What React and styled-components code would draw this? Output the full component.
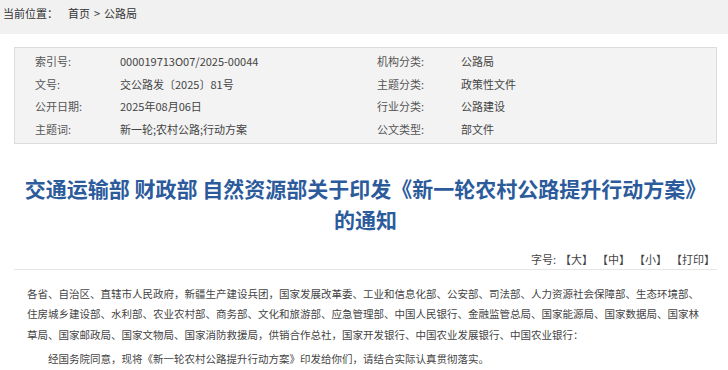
import React from 'react';
import styled, { createGlobalStyle } from 'styled-components';

const GlobalStyle = createGlobalStyle`
  body {
    margin: 0;
    background: #f1f1f1;
    font-family: "Noto Sans CJK SC", "Noto Sans", sans-serif;
    color: #333;
  }
`;

const Breadcrumb = styled.div`
  height: 34px;
  padding: 0 3px 8px;
  box-sizing: border-box;
  display: flex;
  align-items: center;
  gap: 4px;
  font-size: 11px;
  line-height: 1;
  color: #333;
`;

const Crumb = styled.span`
  margin-left: ${p => (p.gap ? '6px' : '0')};
`;

const Page = styled.div`
  background: #fff;
  padding: 13px 11px 0 14px;
  height: 336px;
  box-sizing: border-box;
`;

const InfoBox = styled.div`
  border: 1px solid #dcdcdc;
  background: #f3f3f3;
  padding: 2px 0 3px 20px;
  display: grid;
  grid-template-columns: 85px 257px 84px 1fr;
  grid-auto-rows: 22.5px;
  align-items: center;
  font-size: 11px;
`;

const Label = styled.span`
  color: #555;
`;

const Value = styled.span`
  color: #444;
`;

const Title = styled.h1`
  margin: 29px 0 0;
  text-align: center;
  font-size: 21px;
  line-height: 31px;
  font-weight: bold;
  color: #2c5b9c;
`;

const Tools = styled.div`
  display: flex;
  justify-content: flex-end;
  gap: 4px;
  margin-top: 16px;
  padding: 0 2px 2px 0;
  font-size: 11px;
  line-height: 16px;
  color: #444;
  border-bottom: 1px solid #e6e6e6;
`;

const Body = styled.div`
  padding: 14px 14px 0 13px;
  font-size: 10.5px;
  line-height: 20.3px;
  color: #444;
`;

const Para = styled.p`
  margin: 0 0 4px;
  text-indent: ${p => (p.indent ? '2em' : '0')};
`;

const rows = [
  ['索引号:', '000019713O07/2025-00044', '机构分类:', '公路局'],
  ['文号:', '交公路发〔2025〕81号', '主题分类:', '政策性文件'],
  ['公开日期:', '2025年08月06日', '行业分类:', '公路建设'],
  ['主题词:', '新一轮;农村公路;行动方案', '公文类型:', '部文件'],
];

export default function App() {
  return (
    <>
      <GlobalStyle />
      <Breadcrumb>
        <span>当前位置：</span>
        <Crumb gap>首页</Crumb>
        <span>&gt;</span>
        <span>公路局</span>
      </Breadcrumb>
      <Page>
        <InfoBox>
          {rows.map(r => (
            <React.Fragment key={r[0]}>
              <Label>{r[0]}</Label>
              <Value>{r[1]}</Value>
              <Label>{r[2]}</Label>
              <Value>{r[3]}</Value>
            </React.Fragment>
          ))}
        </InfoBox>
        <Title>
          交通运输部 财政部 自然资源部关于印发《新一轮农村公路提升行动方案》
          <br />
          的通知
        </Title>
        <Tools>
          <span>字号:</span>
          <span>【大】</span>
          <span>【中】</span>
          <span>【小】</span>
          <span>【打印】</span>
        </Tools>
        <Body>
          <Para>
            各省、自治区、直辖市人民政府，新疆生产建设兵团，国家发展改革委、工业和信息化部、公安部、司法部、人力资源社会保障部、生态环境部、住房城乡建设部、水利部、农业农村部、商务部、文化和旅游部、应急管理部、中国人民银行、金融监管总局、国家能源局、国家数据局、国家林草局、国家邮政局、国家文物局、国家消防救援局，供销合作总社，国家开发银行、中国农业发展银行、中国农业银行：
          </Para>
          <Para indent>
            经国务院同意，现将《新一轮农村公路提升行动方案》印发给你们，请结合实际认真贯彻落实。
          </Para>
        </Body>
      </Page>
    </>
  );
}
